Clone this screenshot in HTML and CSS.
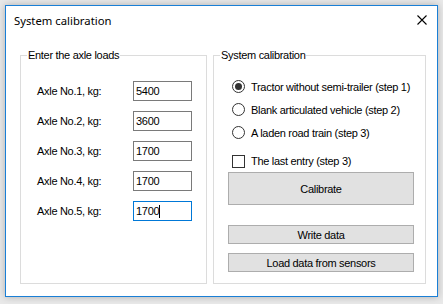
FILE: index.html
```html
<!DOCTYPE html>
<html lang="en">
<head>
    <meta charset="UTF-8">
    <meta name="viewport" content="width=device-width, initial-scale=1.0">
    <title>System calibration</title>

    <!-- CSS Styles -->
    <link rel="stylesheet" href="styles.css">
</head>
<body>

    <!-- Dialog window -->
    <div class="window">
        <div class="titlebar">
            <span class="title">System calibration</span>
            <span class="close">
                <svg width="10" height="10" viewBox="0 0 10 10">
                    <path d="M0.5 0.5 L9.5 9.5 M9.5 0.5 L0.5 9.5" stroke="#000" stroke-width="1.1" fill="none"/>
                </svg>
            </span>
        </div>

        <div class="content">
            <!-- Axle loads -->
            <fieldset class="group group-loads">
                <legend>Enter the axle loads</legend>
                <div class="loads">
                    <label>Axle No.1, kg:</label>
                    <div class="textbox">5400</div>
                    <label>Axle No.2, kg:</label>
                    <div class="textbox">3600</div>
                    <label>Axle No.3, kg:</label>
                    <div class="textbox">1700</div>
                    <label>Axle No.4, kg:</label>
                    <div class="textbox">1700</div>
                    <label>Axle No.5, kg:</label>
                    <div class="textbox focused">1700<span class="caret"></span></div>
                </div>
            </fieldset>

            <!-- Calibration -->
            <fieldset class="group group-calib">
                <legend>System calibration</legend>
                <div class="options">
                    <div class="option"><span class="radio checked"></span>Tractor without semi-trailer (step 1)</div>
                    <div class="option"><span class="radio"></span>Blank articulated vehicle (step 2)</div>
                    <div class="option"><span class="radio"></span>A laden road train (step 3)</div>
                    <div class="option check-row"><span class="checkbox"></span>The last entry (step 3)</div>
                </div>
                <button class="btn btn-big">Calibrate</button>
                <button class="btn btn-write">Write data</button>
                <button class="btn btn-load">Load data from sensors</button>
            </fieldset>
        </div>
    </div>

</body>
</html>
```

FILE: styles.css
```css
/* Reset styles */
* {
    margin: 0;
    padding: 0;
    box-sizing: border-box;
}

body {
    font-family: 'Liberation Sans', Arial, sans-serif;
    font-size: 11px;
    letter-spacing: -0.3px;
    color: #000;
    background: #e9e9e9;
    width: 443px;
    height: 304px;
    overflow: hidden;
}

/* Window */
.window {
    margin: 5px 0 0 5px;
    width: 433px;
    height: 292px;
    background: #fff;
    border: 1px solid #1a7fd6;
    box-shadow: 0 0 7px rgba(0, 0, 0, 0.25);
    display: flex;
    flex-direction: column;
}

.titlebar {
    height: 29px;
    display: flex;
    align-items: center;
    justify-content: space-between;
    padding: 0 10px 0 8px;
}

.title {
    font-family: 'Noto Sans', 'Open Sans', sans-serif;
    font-size: 11.3px;
    letter-spacing: 0;
    color: #000;
}

.close {
    display: flex;
    margin-top: -2px;
}

/* Group boxes */
.content {
    flex: 1;
    display: flex;
    gap: 6px;
    padding: 14px 11px 12px 14px;
}

.group {
    border: 1px solid #dcdcdc;
    height: 235px;
}

.group legend {
    padding: 0 1px;
    line-height: 13px;
    font-size: 11px;
}

.group-loads {
    width: 187px;
    padding: 19px 0 0 16px;
}

.group-loads legend {
    margin-left: -10px;
}

.group-calib {
    width: 213px;
    padding: 13px 0 0 14px;
}

.group-calib legend {
    margin-left: -8px;
}

/* Axle rows */
.loads {
    display: grid;
    grid-template-columns: 96px 59px;
    row-gap: 10px;
    align-items: center;
}

.textbox {
    height: 20px;
    border: 1px solid #7a7a7a;
    padding-left: 2px;
    line-height: 18px;
    display: flex;
    align-items: center;
}

.textbox.focused {
    border-color: #0078d7;
}

.caret {
    width: 1px;
    height: 13px;
    background: #000;
}

/* Radio and check */
.options {
    padding-left: 4px;
}

.option {
    height: 23px;
    display: flex;
    align-items: center;
    gap: 6px;
}

.check-row {
    margin-top: 6px;
    height: 22px;
}

.radio {
    width: 13px;
    height: 13px;
    border: 1px solid #333;
    border-radius: 50%;
    display: flex;
    align-items: center;
    justify-content: center;
}

.radio.checked::after {
    content: "";
    width: 7px;
    height: 7px;
    border-radius: 50%;
    background: #333;
}

.checkbox {
    width: 13px;
    height: 13px;
    border: 1px solid #333;
}

/* Buttons */
.btn {
    display: block;
    width: 186px;
    background: #e1e1e1;
    border: 1px solid #adadad;
    font-family: 'Liberation Sans', Arial, sans-serif;
    font-size: 11px;
    letter-spacing: -0.3px;
    color: #000;
}

.btn-big {
    height: 33px;
}

.btn-write {
    height: 19px;
    margin-top: 20px;
}

.btn-load {
    height: 19px;
    margin-top: 9px;
}
```
